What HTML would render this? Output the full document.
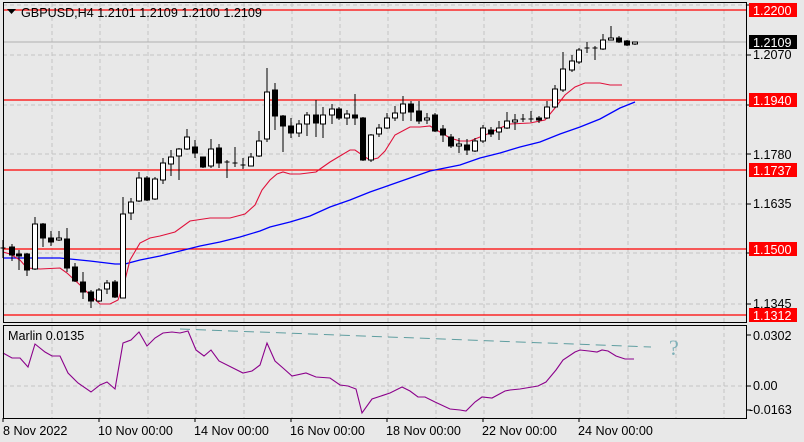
<!DOCTYPE html>
<html><head><meta charset="utf-8"><style>
body{margin:0;width:804px;height:442px;background:#e8e8e8;overflow:hidden;font-family:"Liberation Sans",sans-serif}
svg{display:block}
</style></head><body>
<svg width="804" height="442" viewBox="0 0 804 442" xmlns="http://www.w3.org/2000/svg" font-family="Liberation Sans, sans-serif">
<rect width="804" height="442" fill="#e8e8e8"/>
<g stroke="#c4c4c4" stroke-dasharray="4,3" stroke-width="1">
<path d="M52 3V323M100 3V323M148 3V323M196 3V323M244 3V323M292 3V323M340 3V323M388 3V323M436 3V323M484 3V323M532 3V323M580 3V323M628 3V323M676 3V323M724 3V323"/>
<path d="M52 326V418M100 326V418M148 326V418M196 326V418M244 326V418M292 326V418M340 326V418M388 326V418M436 326V418M484 326V418M532 326V418M580 326V418M628 326V418M676 326V418M724 326V418"/>
<path d="M3 5H747M3 55H747M3 105H747M3 154H747M3 204H747M3 253H747M3 304H747M3 386H747"/>
</g>
<line x1="3" y1="42" x2="747" y2="42" stroke="#b0b0b0"/>
<g stroke="#ff0000" stroke-width="1.3">
<line x1="3" y1="10" x2="747" y2="10"/><line x1="3" y1="100" x2="747" y2="100"/><line x1="3" y1="170" x2="747" y2="170"/><line x1="3" y1="249" x2="747" y2="249"/><line x1="3" y1="315" x2="747" y2="315"/>
</g>
<polyline fill="none" stroke="#0000ff" stroke-width="1.3" points="3,258 30,258 60,258 90,261 115,264 125,264 140,260 160,256 180,251 200,246 220,242 240,237 260,231 270,227 290,222 310,216 330,207 350,200 370,192 390,185 410,178 430,171 440,169 460,165 480,158 500,153 520,147 540,142 560,134 580,127 600,119 620,108 635,102"/>
<polyline fill="none" stroke="#e0103a" stroke-width="1.1" points="3,252 10,254 20,260 27,268 40,269 60,268 67,273 80,285 90,295 100,304 110,304 118,300 125,280 130,260 140,243 150,238 160,236 175,232 190,221 210,218 230,218 245,214 255,205 262,190 270,180 277,174 283,172 290,174 300,174 316,172 320,169 330,162 340,156 350,150 355,150 365,157 370,160 378,158 385,151 395,135 410,127 420,127 430,126 440,132 450,138 460,141 470,141 480,137 490,133 500,128 510,124 530,123 545,120 555,108 565,95 575,87 585,83 600,83 610,85 622,85"/>
<g stroke="#000" stroke-width="1">
<path d="M3 240V258M12 244V261M19 250V270M27 253V276M35 217V270M43 223V247M51 231V246M59 231V241M67 228V272M75 263V282M83 272V299M91 290V308M99 288V302M107 280V294M115 280V298M123 197V298M131 198V220M139 172V202M147 176V201M155 177V200M163 158V184M171 150V176M179 148V180M187 129V150M195 140V158M203 157V168M211 139V168M219 144V168M227 160V178M235 147V167M243 158V169M251 153V166M259 131V157M267 68V142M275 83V130M283 115V152M291 118V138M299 120V137M307 112V136M316 100V137M323 107V138M332 104V124M339 107V120M347 110V125M355 94V125M363 117V161M371 134V162M379 124V137M387 113V129M395 106V121M403 96V121M411 101V121M419 101V124M427 113V124M435 113V132M443 125V142M451 134V148M459 138V153M467 139V155M475 138V152M483 125V143M491 127V137M499 121V140M507 112V129M515 114V130M523 114V122M531 111V122M539 116V123M547 101V119M555 85V108M563 52V92M572 55V72M579 48V64M587 42V53M595 46V60M603 34V50M611 26V40M619 36V43M627 40V46M635 42V45"/>
<path d="M0.5 248H5.5M224.5 162H229.5M232.5 163H237.5M240.5 165H245.5M520.5 119H525.5M528.5 119H533.5M584.5 48H589.5M592.5 48H597.5"/>
</g>
<g stroke="#000" stroke-width="1" fill="#000">
<rect x="9.5" y="247" width="5" height="8"/><rect x="16.5" y="254" width="5" height="2"/><rect x="24.5" y="254" width="5" height="16"/><rect x="40.5" y="224" width="5" height="14"/><rect x="48.5" y="238" width="5" height="4"/><rect x="64.5" y="239" width="5" height="29"/><rect x="72.5" y="267" width="5" height="14"/><rect x="80.5" y="282" width="5" height="10"/><rect x="88.5" y="292" width="5" height="9"/><rect x="112.5" y="282" width="5" height="15"/><rect x="144.5" y="178" width="5" height="22"/><rect x="192.5" y="147" width="5" height="6"/><rect x="200.5" y="157" width="5" height="10"/><rect x="216.5" y="148" width="5" height="15"/><rect x="272.5" y="90" width="5" height="26"/><rect x="280.5" y="116" width="5" height="10"/><rect x="288.5" y="126" width="5" height="7"/><rect x="313.5" y="115" width="5" height="8"/><rect x="336.5" y="109" width="5" height="9"/><rect x="352.5" y="115" width="5" height="3"/><rect x="360.5" y="118" width="5" height="42"/><rect x="408.5" y="104" width="5" height="8"/><rect x="416.5" y="111" width="5" height="10"/><rect x="432.5" y="115" width="5" height="16"/><rect x="440.5" y="129" width="5" height="6"/><rect x="448.5" y="137" width="5" height="9"/><rect x="464.5" y="145" width="5" height="5"/><rect x="488.5" y="130" width="5" height="4"/><rect x="536.5" y="118" width="5" height="2"/><rect x="616.5" y="38" width="5" height="4"/><rect x="624.5" y="41" width="5" height="4"/>
</g>
<g stroke="#000" stroke-width="1" fill="#fff">
<rect x="32.5" y="224" width="5" height="45"/><rect x="56.5" y="238" width="5" height="2"/><rect x="96.5" y="290" width="5" height="11"/><rect x="104.5" y="283" width="5" height="6"/><rect x="120.5" y="214" width="5" height="84"/><rect x="128.5" y="202" width="5" height="11"/><rect x="136.5" y="178" width="5" height="23"/><rect x="152.5" y="179" width="5" height="20"/><rect x="160.5" y="163" width="5" height="17"/><rect x="168.5" y="157" width="5" height="7"/><rect x="176.5" y="149" width="5" height="7"/><rect x="184.5" y="137" width="5" height="12"/><rect x="208.5" y="149" width="5" height="17"/><rect x="248.5" y="157" width="5" height="9"/><rect x="256.5" y="141" width="5" height="15"/><rect x="264.5" y="92" width="5" height="47"/><rect x="296.5" y="124" width="5" height="9"/><rect x="304.5" y="115" width="5" height="9"/><rect x="320.5" y="115" width="5" height="9"/><rect x="329.5" y="109" width="5" height="6"/><rect x="344.5" y="114" width="5" height="4"/><rect x="368.5" y="135" width="5" height="25"/><rect x="376.5" y="128" width="5" height="6"/><rect x="384.5" y="118" width="5" height="10"/><rect x="392.5" y="113" width="5" height="5"/><rect x="400.5" y="104" width="5" height="9"/><rect x="424.5" y="118" width="5" height="2"/><rect x="456.5" y="144" width="5" height="2"/><rect x="472.5" y="141" width="5" height="10"/><rect x="480.5" y="128" width="5" height="13"/><rect x="496.5" y="128" width="5" height="4"/><rect x="504.5" y="121" width="5" height="7"/><rect x="512.5" y="120" width="5" height="2"/><rect x="544.5" y="107" width="5" height="11"/><rect x="552.5" y="89" width="5" height="18"/><rect x="560.5" y="69" width="5" height="21"/><rect x="569.5" y="61" width="5" height="9"/><rect x="576.5" y="50" width="5" height="12"/><rect x="600.5" y="40" width="5" height="9"/><rect x="608.5" y="38" width="5" height="2"/><rect x="632.5" y="42" width="5" height="2"/>
</g>
<polyline fill="none" stroke="#5f9ea0" stroke-width="1" stroke-dasharray="10,6" points="180,329 651,347"/>
<polyline fill="none" stroke="#8b008b" stroke-width="1.1" points="3,353 12,358 20,358 28,367 35,344 45,352 52,356 60,356 68,373 78,383 91,392 100,385 107,382 115,389 123,343 131,340 139,332 147,346 155,338 163,333 172,332 180,333 188,331 196,350 204,356 211,350 219,361 243,373 252,371 260,365 267,343 275,361 283,368 292,376 306,373 316,377 330,378 340,385 348,386 356,389 362,413 372,399 390,393 402,387 410,391 418,397 425,397 435,402 450,409 460,410 466,411 475,402 482,397 492,398 505,391 510,390 520,389 538,386 546,382 556,370 563,360 575,352 580,350 589,351 597,352 602,350 608,351 616,356 625,359 634,359"/>
<text x="669" y="355" font-family="Liberation Serif, serif" font-size="22" fill="#7fb0b8">?</text>
<g fill="none" stroke="#000" stroke-width="1">
<rect x="3.5" y="2.5" width="743" height="320"/>
<rect x="3.5" y="325.5" width="743" height="93"/>
</g>
<g stroke="#000"><path d="M747 5h4M747 55h4M747 105h4M747 154h4M747 204h4M747 253h4M747 304h4M747 335h4M747 386h4M747 410h4M3 418v4M99 418v4M195 418v4M291 418v4M387 418v4M483 418v4M579 418v4"/></g>
<path d="M7 9h9l-4.5 5z" fill="#000"/>
<text x="21" y="17" font-size="12.6" fill="#000">GBPUSD,H4  1.2101 1.2109 1.2100 1.2109</text>
<text x="8" y="340" font-size="12.6" fill="#000">Marlin 0.0135</text>
<g font-size="12.6" fill="#000">
<text x="753" y="59">1.2070</text><text x="753" y="159">1.1780</text><text x="753" y="208">1.1635</text><text x="753" y="308">1.1345</text>
<text x="753" y="340">0.0302</text><text x="753" y="390">0.00</text><text x="749" y="414">-0.0163</text>
</g>
<g fill="#ff0000"><rect x="749" y="3" width="48" height="14"/><rect x="749" y="93" width="48" height="14"/><rect x="749" y="163" width="48" height="14"/><rect x="749" y="242" width="48" height="14"/><rect x="749" y="308" width="48" height="14"/></g>
<rect x="749" y="35" width="48" height="14" fill="#000"/>
<g font-size="12.6" fill="#fff">
<text x="753" y="15">1.2200</text><text x="753" y="47">1.2109</text><text x="753" y="105">1.1940</text><text x="753" y="175">1.1737</text><text x="753" y="254">1.1500</text><text x="753" y="320">1.1312</text>
</g>
<g font-size="12.6" fill="#000">
<text x="3" y="435">8 Nov 2022</text><text x="98" y="435">10 Nov 00:00</text><text x="194" y="435">14 Nov 00:00</text><text x="290" y="435">16 Nov 00:00</text><text x="386" y="435">18 Nov 00:00</text><text x="482" y="435">22 Nov 00:00</text><text x="578" y="435">24 Nov 00:00</text>
</g>
</svg>
</body></html>
